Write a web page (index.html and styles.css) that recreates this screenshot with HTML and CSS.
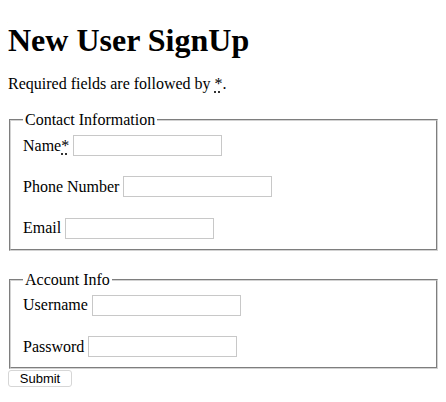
FILE: index.html
```html
<!DOCTYPE html>
<html lang="en">
<head>
<meta charset="utf-8">
<title>New User SignUp</title>
<link rel="stylesheet" href="styles.css">
</head>
<body>
<h1 class="title">New User SignUp</h1>
<p class="note">Required fields are followed by <abbr class="req" title="required">*</abbr>.</p>
<form class="signup">
  <fieldset class="group">
    <legend class="group-title">Contact Information</legend>
    <div class="rows">
      <div class="field"><label class="field-label" for="name">Name<abbr class="req" title="required">*</abbr></label><input class="text-input" id="name" type="text"></div>
      <div class="field"><label class="field-label" for="phone">Phone Number</label><input class="text-input" id="phone" type="text"></div>
      <div class="field"><label class="field-label" for="email">Email</label><input class="text-input" id="email" type="text"></div>
    </div>
  </fieldset>
  <fieldset class="group group-account">
    <legend class="group-title">Account Info</legend>
    <div class="rows">
      <div class="field"><label class="field-label" for="user">Username</label><input class="text-input" id="user" type="text"></div>
      <div class="field"><label class="field-label" for="pass">Password</label><input class="text-input" id="pass" type="password"></div>
    </div>
  </fieldset>
  <button class="submit" type="submit">Submit</button>
</form>
</body>
</html>
```

FILE: styles.css
```css
body {
  margin: 8px;
  font-family: "Liberation Serif", "Times New Roman", serif;
  font-size: 16px;
  color: #000;
  background: #fff;
}

.title {
  font-size: 32px;
  font-weight: bold;
  margin: 13.5px 0 16px;
}

.note {
  margin: 0 0 18.5px;
}

.req {
  text-decoration: underline dotted;
  text-underline-offset: 3px;
}

.signup {
  margin: 0;
}

.group {
  margin: 0 0 0 1px;
  padding: 5px 12px 9px;
  border: 2px groove #d2d2d2;
  min-width: 0;
}

.group-account {
  margin-top: 20px;
}

.group-title {
  padding: 0 2px;
  font-size: 16px;
}

.rows {
  display: flex;
  flex-direction: column;
  gap: 18.4px;
}

.field {
  display: flex;
  align-items: center;
  gap: 4px;
  height: 23px;
}

.text-input {
  box-sizing: border-box;
  width: 149px;
  height: 21px;
  margin: 0;
  padding: 1px 3px;
  border: 1px solid #c8c8c8;
  background: #fff;
  font: 13px "Liberation Sans", Arial, sans-serif;
}

.submit {
  display: block;
  box-sizing: border-box;
  width: 64px;
  height: 17px;
  margin: 1px 0 0;
  padding: 0;
  border: 1px solid #d6d6d6;
  border-radius: 3px;
  background: #fff;
  color: #000;
  font: 13px "Liberation Sans", Arial, sans-serif;
  line-height: 15px;
}
```
